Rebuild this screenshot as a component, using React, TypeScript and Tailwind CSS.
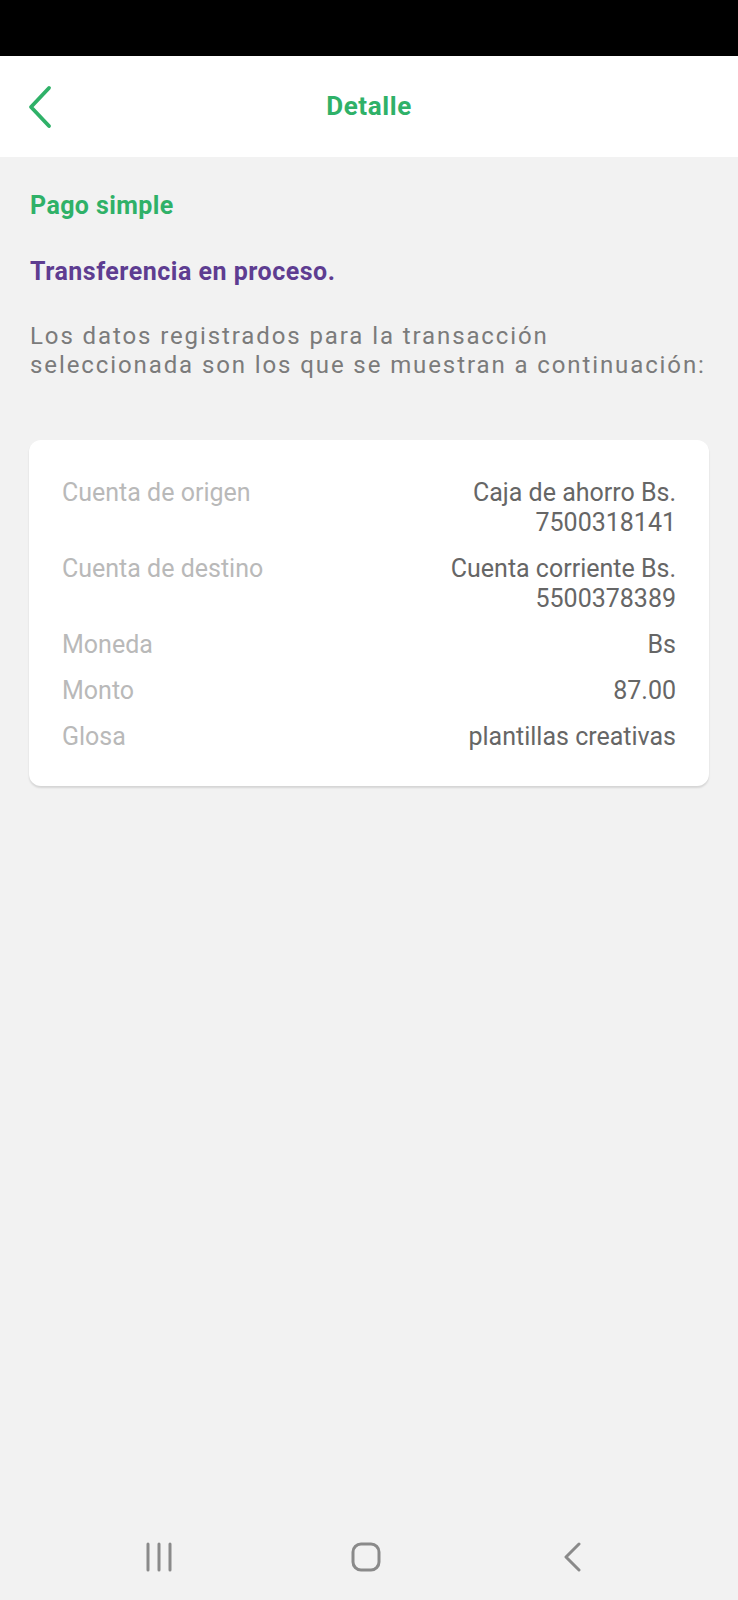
import React from 'react';

const rows: { label: string; value: string[] }[] = [
  { label: 'Cuenta de origen', value: ['Caja de ahorro Bs.', '7500318141'] },
  { label: 'Cuenta de destino', value: ['Cuenta corriente Bs.', '5500378389'] },
  { label: 'Moneda', value: ['Bs'] },
  { label: 'Monto', value: ['87.00'] },
  { label: 'Glosa', value: ['plantillas creativas'] },
];

const App: React.FC = () => {
  return (
    <div className="h-[1600px] w-[738px] flex flex-col bg-[#f2f2f2] font-['Roboto',sans-serif]">
      {/* status bar */}
      <div className="h-[56px] bg-black" />

      {/* header */}
      <div className="h-[101px] bg-white grid grid-cols-[1fr_auto_1fr] items-center">
        <div className="pl-[27px] flex items-center">
          <svg width="27" height="44" viewBox="0 0 27 44" fill="none">
            <polyline
              points="22,3 4,22 22,41"
              stroke="#2fb168"
              strokeWidth="3.8"
              strokeLinecap="round"
              strokeLinejoin="round"
            />
          </svg>
        </div>
        <h1 className="text-[26px] font-bold text-[#2fb168] tracking-[0.6px]">Detalle</h1>
        <div />
      </div>

      {/* content */}
      <div className="px-[30px] pt-[34px]">
        <h2 className="text-[25px] leading-[30px] font-bold text-[#2fb168] tracking-[0.4px]">Pago simple</h2>
        <h3 className="mt-[36px] text-[25px] leading-[30px] font-bold text-[#5e3d91] tracking-[0.5px]">
          Transferencia en proceso.
        </h3>
        <p className="mt-[35px] text-[24px] leading-[29px] text-[#7b7b7b] tracking-[1.9px]">
          Los datos registrados para la transacción
          <br />
          seleccionada son los que se muestran a continuación:
        </p>
      </div>

      {/* card */}
      <div className="mx-[29px] mt-[60px] bg-white rounded-[12px] shadow-[0_2px_2px_rgba(0,0,0,0.12)] pl-[33px] pr-[33px] pt-[38px] pb-[34px] flex flex-col gap-[16px]">
        {rows.map((r) => (
          <div key={r.label} className="flex justify-between text-[25px] leading-[30px]">
            <span className="text-[#b9b9b9]">{r.label}</span>
            <div className="flex flex-col items-end text-right text-[#666666]">
              {r.value.map((v) => (
                <span key={v}>{v}</span>
              ))}
            </div>
          </div>
        ))}
      </div>

      {/* android nav bar */}
      <div className="mt-auto h-[86px] flex items-center justify-center pr-[7px]">
        <div className="w-[207px] flex justify-center">
          <svg width="28" height="30" viewBox="0 0 28 30" fill="none">
            <line x1="3" y1="2" x2="3" y2="28" stroke="#8a8a8a" strokeWidth="3" strokeLinecap="round" />
            <line x1="14" y1="2" x2="14" y2="28" stroke="#8a8a8a" strokeWidth="3" strokeLinecap="round" />
            <line x1="25" y1="2" x2="25" y2="28" stroke="#8a8a8a" strokeWidth="3" strokeLinecap="round" />
          </svg>
        </div>
        <div className="w-[207px] flex justify-center">
          <svg width="30" height="30" viewBox="0 0 30 30" fill="none">
            <rect x="2" y="2" width="26" height="26" rx="8" stroke="#8a8a8a" strokeWidth="3" />
          </svg>
        </div>
        <div className="w-[207px] flex justify-center">
          <svg width="20" height="30" viewBox="0 0 20 30" fill="none">
            <polyline
              points="16,2 3,15 16,28"
              stroke="#8a8a8a"
              strokeWidth="3"
              strokeLinecap="round"
              strokeLinejoin="round"
            />
          </svg>
        </div>
      </div>
    </div>
  );
};

export default App;
